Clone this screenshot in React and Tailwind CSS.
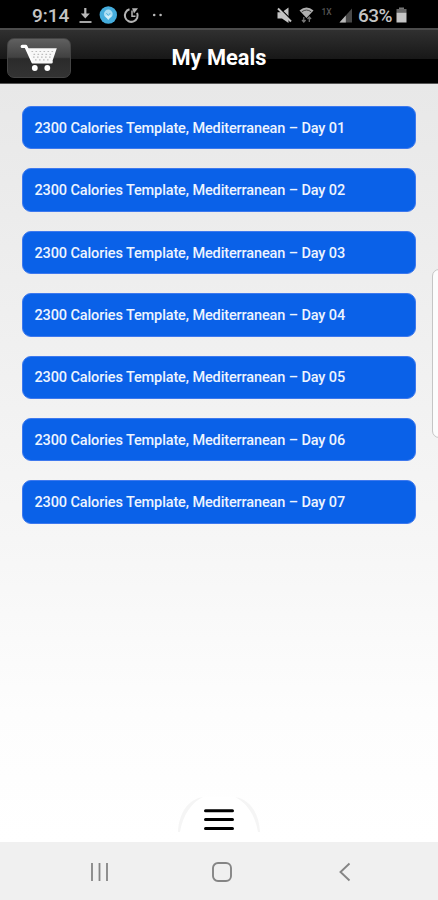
import React from "react";

const meals = ["01", "02", "03", "04", "05", "06", "07"];

const StatusBar = () => {
  return (
    <div className="flex h-7 shrink-0 items-center bg-black pt-[3px] text-[#c4c4c4]">
      <span className="ml-8 w-[46px] text-[19px] leading-none font-medium whitespace-nowrap">
        9:14
      </span>
      <svg className="h-5 w-[90px]" viewBox="78 6 90 20" fill="none">
        <path d="M85.3 8v8" stroke="#b8b8b8" strokeWidth="2.2" />
        <path d="M80.8 13.5h9l-4.5 5z" fill="#b8b8b8" />
        <path d="M79.5 22h12" stroke="#b8b8b8" strokeWidth="1.8" />
        <circle cx="108.3" cy="15" r="8.7" fill="#45addd" />
        <circle cx="108.3" cy="14" r="4.4" fill="#a9dcf2" />
        <path d="M104.8 15.5l3.5 4.5 3.5-4.5z" fill="#d3eff9" />
        <path d="M106.3 13l2 2.5 2-2.5" stroke="#58b5df" strokeWidth="1" />
        <path
          d="M129.5 9.3a6.4 6.4 0 1 0 7.6 3.5"
          stroke="#b4b4b4"
          strokeWidth="2"
        />
        <path d="M132 8.2h6l-4 5.3z" fill="#b4b4b4" />
        <path d="M132 10.5v5.8h3.5" stroke="#b4b4b4" strokeWidth="1.5" />
        <circle cx="154.2" cy="15" r="1.3" fill="#b8b8b8" />
        <circle cx="160.6" cy="15" r="1.3" fill="#b8b8b8" />
      </svg>
      <svg className="ml-auto h-5 w-[80px]" viewBox="275 6 80 20" fill="none">
        <path d="M277.5 12.3h4.5l6.5-4.8V23L282 18.5h-4.5z" fill="#c4c4c4" />
        <path d="M279.5 8l13 13" stroke="#000" strokeWidth="1.4" />
        <path d="M278 8.5l13 13" stroke="#c4c4c4" strokeWidth="2" />
        <path d="M299.5 10.5q7-6 14 0l-7 7.5z" fill="#b0b0b0" />
        <path d="M301.8 11.8q4.7-3.5 9.4 0" stroke="#444" strokeWidth="1" />
        <path d="M303.8 17v5M302 20l1.8 2 1.8-2M309.3 22v-5M307.5 19l1.8-2 1.8 2" stroke="#777" strokeWidth="1.2" />
        <text x="321.5" y="15" fontSize="8.5" fontWeight="500" fill="#555">
          1X
        </text>
        <path d="M339.5 22.5l12.5-14v14z" fill="#484848" />
        <path d="M339.5 22.5l6.3-7v7z" fill="#b8b8b8" />
      </svg>
      <span className="ml-[3px] w-[35px] text-[19px] leading-none font-medium tracking-[-0.5px] whitespace-nowrap">
        63%
      </span>
      <svg className="mr-[31px] ml-[3px] h-5 w-[11px]" viewBox="395 6 11 20">
        <path d="M398 7.5h5v2h-5z" fill="#777" />
        <path d="M395.5 9h10v4h-10z" fill="#666" />
        <path d="M395.5 12.8h10v9.7h-10z" fill="#c4c4c4" />
      </svg>
    </div>
  );
};

const CartIcon = () => {
  return (
    <svg className="h-7 w-[38px]" viewBox="0 0 38 28" fill="none">
      <path
        d="M2.2 2.4h3.6L13 18h18.2"
        stroke="#fff"
        strokeWidth="3.2"
        strokeLinejoin="round"
        strokeLinecap="round"
      />
      <path d="M7.5 4.2h29.3L31.8 19H13z" fill="#f8f8f8" />
      <path
        d="M11.5 7.5h23M13.5 10.3h20M13 13.1h20M15 15.9h16"
        stroke="#bcbcbc"
        strokeWidth="1.2"
        strokeDasharray="1.6 2.4"
      />
      <circle cx="14.8" cy="24" r="2.9" fill="#fff" />
      <circle cx="27.3" cy="24" r="2.9" fill="#fff" />
    </svg>
  );
};

const Header = () => {
  return (
    <div className="grid h-14 shrink-0 grid-cols-[1fr_auto_1fr] items-center border-t-2 border-b border-t-[#4c4c4c] border-b-[#555] bg-[linear-gradient(#303030,#181818_54%,#000_55%,#000)] px-[7px] pt-[2px]">
      <button className="flex h-10 w-16 items-center justify-center rounded-[7px] border border-[#444] bg-[linear-gradient(#606060,#414141_48%,#2b2b2b_52%,#333)]">
        <CartIcon />
      </button>
      <h1 className="pt-px text-[21.8px] font-bold whitespace-nowrap text-white">
        My Meals
      </h1>
    </div>
  );
};

const MealItem = ({ day }) => {
  return (
    <button className="flex h-[43.4px] w-full items-center rounded-[9px] border border-[#3e79ee] bg-[#0a61e8] px-[11.5px] pt-[2px] text-left text-[14.5px] font-medium tracking-[-0.12px] whitespace-nowrap text-[#edf4ff]">
      2300 Calories Template, Mediterranean – Day {day}
    </button>
  );
};

const MenuButton = () => {
  return (
    <button className="mx-auto h-[47px] w-[84px]">
      <svg className="h-[47px] w-[84px]" viewBox="0 0 84 47" fill="none">
        <path d="M1 37C2 18 12 5 25 2h34c13 3 23 16 24 35v10H1z" fill="#fff" />
        <path d="M1 37C2 17 12 4 26 2 14 8 6 20 3 37z" fill="#f5f5f5" />
        <path d="M83 37C82 17 72 4 58 2c12 6 20 18 23 35z" fill="#f5f5f5" />
        <path
          d="M28.5 15.7h27M28.5 24.6h27M28.5 33.5h27"
          stroke="#000"
          strokeWidth="3"
          strokeLinecap="round"
        />
      </svg>
    </button>
  );
};

const NavBar = () => {
  return (
    <div className="flex h-[58px] shrink-0 items-center justify-between bg-[#f0f0f0] pt-[2px] pr-[87px] pl-[90px]">
      <svg className="h-5 w-[19px]" viewBox="0 0 19 20">
        <path d="M2 1v18M9.5 1v18M17 1v18" stroke="#858585" strokeWidth="1.8" />
      </svg>
      <svg className="mr-[5px] h-[22px] w-[22px]" viewBox="0 0 22 22">
        <rect x="2" y="2" width="18" height="18" rx="5" fill="none" stroke="#858585" strokeWidth="1.9" />
      </svg>
      <svg className="h-5 w-3" viewBox="0 0 12 20">
        <path d="M10.5 1.5L1.5 10l9 8.5" fill="none" stroke="#858585" strokeWidth="1.9" />
      </svg>
    </div>
  );
};

export default function App() {
  return (
    <div className="relative flex h-[900px] w-full flex-col overflow-hidden font-['Roboto',sans-serif]">
      <StatusBar />
      <Header />
      <main className="flex flex-1 flex-col justify-between bg-[linear-gradient(#e8e8e8,#f6f6f6_60%,#fdfdfd_83%,#fff)] pt-[22px]">
        <div className="flex flex-col gap-[19px] px-[22px]">
          {meals.map((day) => (
            <MealItem key={day} day={day} />
          ))}
        </div>
        <MenuButton />
      </main>
      <NavBar />
      {/* edge panel handle */}
      <div className="absolute top-[269px] right-[-10px] h-[169px] w-4 rounded-[7px] border border-[#c5c5c5] bg-[#fcfcfc]" />
    </div>
  );
}
